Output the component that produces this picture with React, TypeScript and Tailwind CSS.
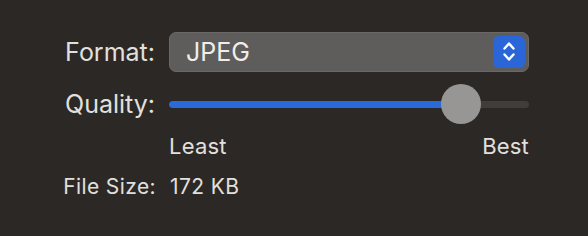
import React from "react"

function Chevrons() {
  return (
    <svg width="32" height="32" viewBox="0 0 32 32" fill="none">
      <path d="M11.5 12.5 L16 7.5 L20.5 12.5" stroke="#ffffff" strokeWidth="2.4" strokeLinecap="round" strokeLinejoin="round" />
      <path d="M11.5 18.5 L16 23.5 L20.5 18.5" stroke="#ffffff" strokeWidth="2.4" strokeLinecap="round" strokeLinejoin="round" />
    </svg>
  )
}

export default function App() {
  const value = 0.85

  return (
    <div
      className="w-[588px] h-[236px] bg-[#2b2826] pt-[32px] text-[#e2e0de]"
      style={{ fontFamily: "Inter, 'Liberation Sans', sans-serif" }}
    >
      {/* Format */}
      <div className="flex items-center h-[40px]">
        <div className="w-[155px] text-right text-[25px] leading-none">Format:</div>
        <div className="ml-[14px] w-[360px] h-[40px] rounded-[7px] bg-[#5f5d5b] border border-[#6b6967] flex items-center justify-between pl-[16px] pr-[3px]">
          <span className="text-[25px] leading-none text-[#efeeed]">JPEG</span>
          <div className="w-[32px] h-[32px] rounded-[6px] bg-[#2a66d8] flex items-center justify-center">
            <Chevrons />
          </div>
        </div>
      </div>

      {/* Quality */}
      <div className="flex items-center h-[40px] mt-[12px]">
        <div className="w-[155px] text-right text-[25px] leading-none">Quality:</div>
        <div className="ml-[14px] w-[360px] h-[40px] relative flex items-center">
          <div className="w-full h-[7px] rounded-full bg-[#403d3b] overflow-hidden">
            <div className="h-full bg-[#2a6ad9] rounded-full" style={{ width: `${20 + value * 320}px` }} />
          </div>
          <div
            className="absolute top-0 w-[40px] h-[40px] rounded-full bg-[#989694]"
            style={{ left: `${value * 320}px` }}
          />
        </div>
      </div>

      {/* Least / Best */}
      <div className="flex items-center h-[24px] mt-[10px]">
        <div className="ml-[169px] w-[360px] flex justify-between text-[22px] tracking-[0.2px] leading-none">
          <span>Least</span>
          <span>Best</span>
        </div>
      </div>

      {/* File Size */}
      <div className="flex items-center h-[24px] mt-[16px]">
        <div className="w-[156px] text-right text-[21px] tracking-[0.4px] leading-none">File Size:</div>
        <div className="ml-[14px] text-[21px] tracking-[0.4px] leading-none">172 KB</div>
      </div>
    </div>
  )
}
